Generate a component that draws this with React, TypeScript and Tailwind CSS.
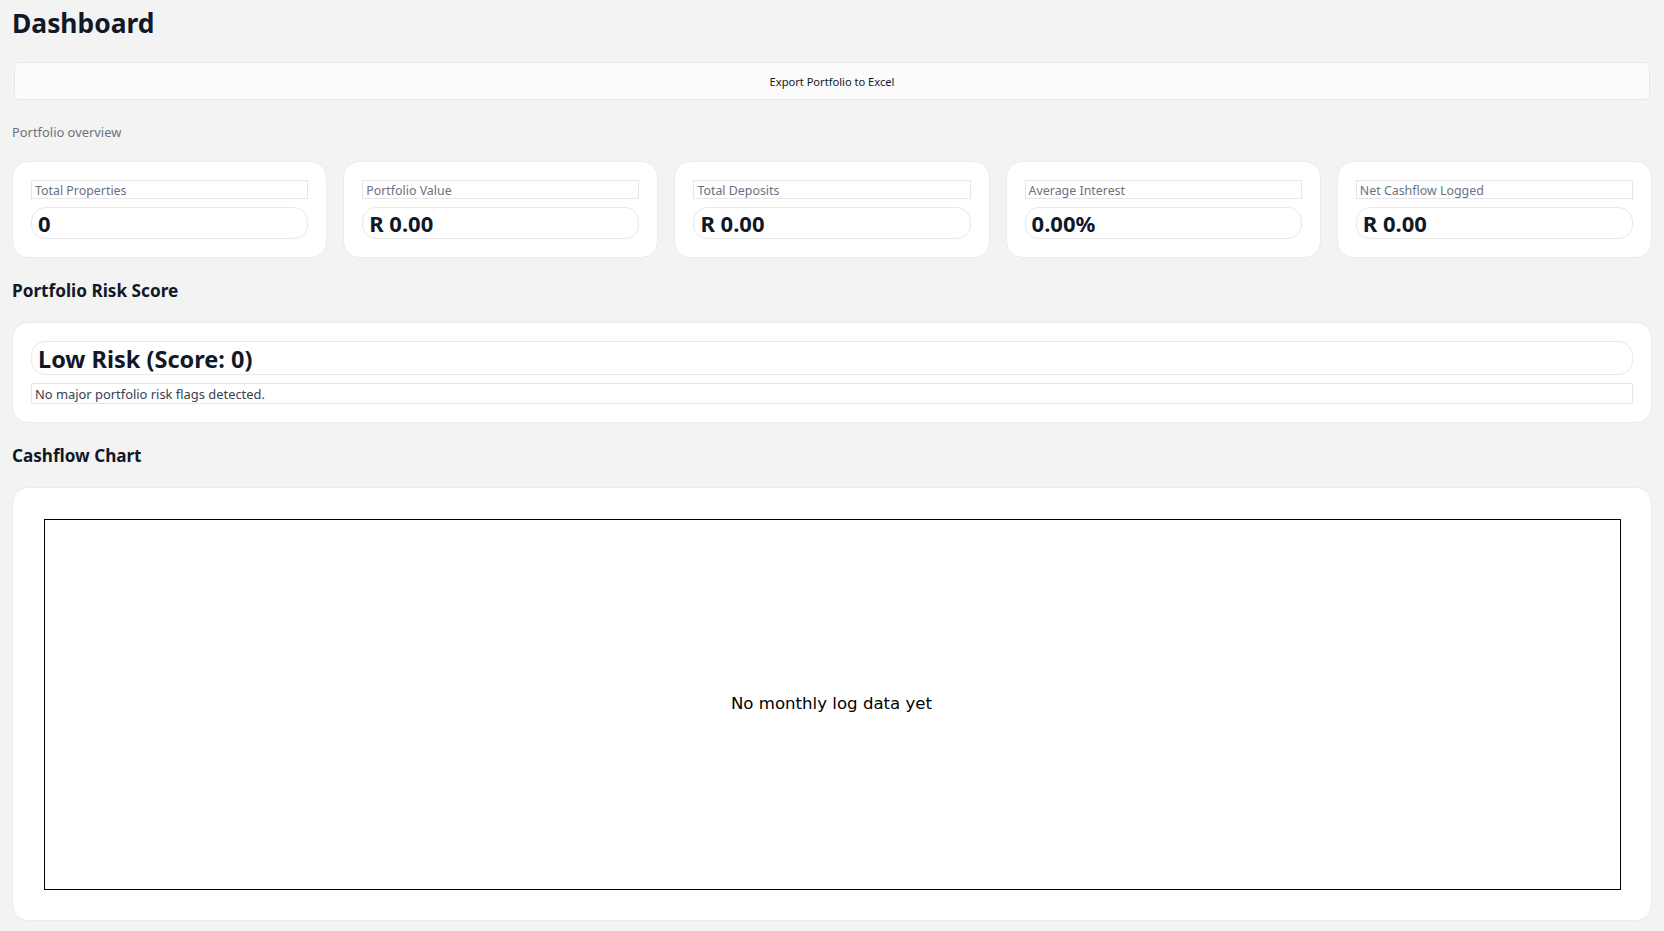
const stats = [
  { label: "Total Properties", value: "0" },
  { label: "Portfolio Value", value: "R 0.00" },
  { label: "Total Deposits", value: "R 0.00" },
  { label: "Average Interest", value: "0.00%" },
  { label: "Net Cashflow Logged", value: "R 0.00" },
];

function StatCard({ label, value }: { label: string; value: string }) {
  return (
    <div className="flex flex-col gap-2 rounded-2xl border border-[#ebebeb] bg-white p-[18px]">
      <div className="h-[19px] border border-[#e6e6e6] pl-[3px] text-[12.4px] leading-[19px] text-[#6b7280]">
        {label}
      </div>
      <div className="h-8 rounded-[14px] border border-[#e9e9e9] pl-[6px] text-[22px] leading-[31px] font-bold text-[#111827]">
        {value}
      </div>
    </div>
  );
}

export default function App() {
  return (
    <div className="min-h-[931px] bg-[#f3f3f3] px-3 font-['Noto_Sans',sans-serif]">
      <h1 className="h-[61px] pt-[3px] text-[26.4px] leading-[40px] font-bold text-[#111827]">
        Dashboard
      </h1>

      <button className="mx-[2px] mt-[1px] block h-[38px] w-[1636px] rounded-md border border-[#e8e8e8] bg-[#fbfbfb] pt-[2px] text-[11.1px] text-[#111827]">
        Export Portfolio to Excel
      </button>

      <p className="mt-[22px] h-[39px] text-[12.9px] leading-5 text-[#6b7280]">Portfolio overview</p>

      <div className="grid grid-cols-5 gap-4">
        {stats.map((stat) => (
          <StatCard key={stat.label} label={stat.label} value={stat.value} />
        ))}
      </div>

      <h2 className="flex h-[64px] items-center pt-[2px] text-[17.2px] font-bold text-[#111827]">
        Portfolio Risk Score
      </h2>

      <div className="flex flex-col gap-2 rounded-2xl border border-[#ebebeb] bg-white p-[18px]">
        <div className="h-[34px] rounded-[14px] border border-[#e9e9e9] pl-[6px] text-[23.5px] leading-[34px] font-bold text-[#111827]">
          Low Risk (Score: 0)
        </div>
        <div className="h-[21px] border border-[#e6e6e6] pl-[3px] text-[12.9px] leading-[21px] text-[#374151]">
          No major portfolio risk flags detected.
        </div>
      </div>

      <h2 className="flex h-[64px] items-center pt-[2px] text-[17.1px] font-bold text-[#111827]">
        Cashflow Chart
      </h2>

      <div className="h-[434px] rounded-2xl border border-[#ebebeb] bg-white pt-[31px] pr-[30px] pl-[31px]">
        <div className="flex h-[371px] items-center justify-center border-[1.5px] border-black pr-[2px] font-['DejaVu_Sans',sans-serif] text-[16.6px] text-black">
          No monthly log data yet
        </div>
      </div>
    </div>
  );
}
